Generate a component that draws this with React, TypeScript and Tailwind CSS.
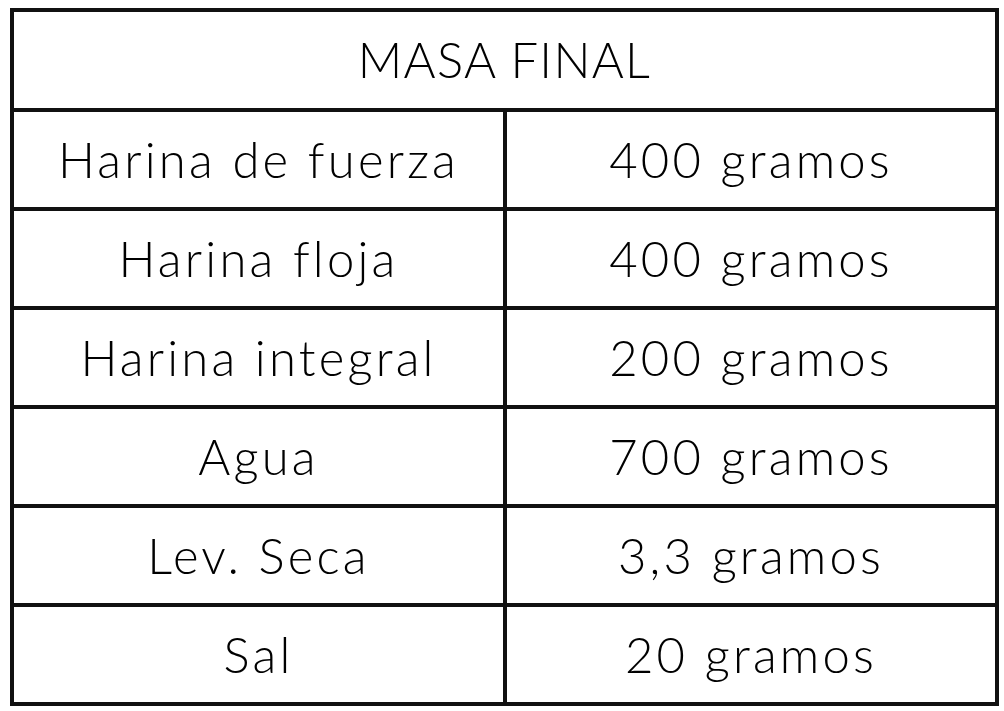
const rows = [
  ["Harina de fuerza", "400 gramos"],
  ["Harina floja", "400 gramos"],
  ["Harina integral", "200 gramos"],
  ["Agua", "700 gramos"],
  ["Lev. Seca", "3,3 gramos"],
  ["Sal", "20 gramos"],
];

function Cell({ text }: { text: string }) {
  return (
    <div className="flex h-[95px] items-center justify-center bg-white text-[49px] font-light tracking-[3.2px] text-black">
      {text}
    </div>
  );
}

export default function App() {
  return (
    <div className="h-[711px] w-[1004px] bg-white pl-[10px] pt-[8px] font-['Lato',sans-serif]">
      <div className="grid w-[989px] grid-cols-[489px_488px] gap-[4px] bg-[#111] p-[4px]">
        <div className="col-span-2 flex h-[96px] items-center justify-center bg-white text-[49px] font-light tracking-[1.3px] text-black">
          MASA FINAL
        </div>
        {rows.map(([name, amount]) => (
          <>
            <Cell key={name} text={name} />
            <Cell key={name + "-q"} text={amount} />
          </>
        ))}
      </div>
    </div>
  );
}
